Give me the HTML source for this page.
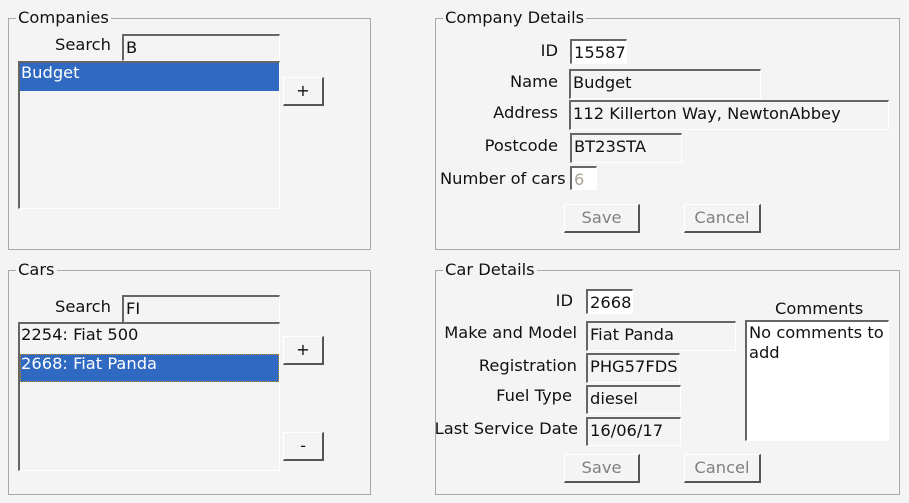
<!DOCTYPE html>
<html><head><style>
body{margin:0;width:909px;height:503px;background:#f4f4f4;font-family:"DejaVu Sans","Liberation Sans",sans-serif;font-size:16.3px;color:#111;position:relative;overflow:hidden}
div,span{position:absolute;box-sizing:border-box}
.grp{border:1px solid #a8a8a8}
.ttl{background:#f4f4f4;padding:0 2px;line-height:18px;top:-10px;left:7px}
.lbl{line-height:20px;white-space:nowrap}
.r{text-align:right}
.fld{border-top:2px solid #666;border-left:2px solid #666;border-right:1px solid #fff;border-bottom:1px solid #fff;padding-left:2px;line-height:24px;white-space:nowrap;overflow:hidden}
.w{background:#fff}
.btn{border-top:1px solid #fff;border-left:1px solid #fff;border-right:2px solid #555;border-bottom:2px solid #555;text-align:center;line-height:25px}
.dis{color:#808080}
.sel{background:#2f69c2;color:#fff;padding-left:1px;line-height:20px}
</style></head><body>

<div class="grp" style="left:8px;top:18px;width:363px;height:232px"><span class="ttl">Companies</span></div>
<div class="lbl" style="left:55px;top:35px">Search</div>
<div class="fld" style="left:122px;top:34px;width:158px;height:27px">B</div>
<div class="fld" style="left:18px;top:61px;width:262px;height:148px;padding:0"><div class="sel" style="left:0;top:0;right:0;height:28px">Budget</div></div>
<div class="btn" style="left:283px;top:77px;width:41px;height:29px">+</div>

<div class="grp" style="left:8px;top:270px;width:363px;height:225px"><span class="ttl">Cars</span></div>
<div class="lbl" style="left:55px;top:297px">Search</div>
<div class="fld" style="left:122px;top:295px;width:158px;height:28px">FI</div>
<div class="fld" style="left:18px;top:322px;width:262px;height:149px;padding:0">
<div style="left:1px;top:0;line-height:22px">2254: Fiat 500</div>
<div class="sel" style="left:0;top:30px;right:0;height:28px;outline:1px dotted #c80;outline-offset:-1px">2668: Fiat Panda</div></div>
<div class="btn" style="left:283px;top:336px;width:41px;height:29px">+</div>
<div class="btn" style="left:283px;top:432px;width:41px;height:29px">-</div>

<div class="grp" style="left:435px;top:18px;width:465px;height:232px"><span class="ttl">Company Details</span></div>
<div class="lbl r" style="right:351px;top:41px">ID</div>
<div class="fld w" style="left:570px;top:39px;width:57px;height:25px">15587</div>
<div class="lbl r" style="right:351px;top:72px">Name</div>
<div class="fld" style="left:569px;top:69px;width:192px;height:30px">Budget</div>
<div class="lbl r" style="right:351px;top:103px">Address</div>
<div class="fld" style="left:569px;top:100px;width:320px;height:30px">112 Killerton Way, NewtonAbbey</div>
<div class="lbl r" style="right:351px;top:136px">Postcode</div>
<div class="fld" style="left:570px;top:133px;width:112px;height:30px">BT23STA</div>
<div class="lbl" style="left:440px;top:169px">Number of cars</div>
<div class="fld w dis" style="left:570px;top:166px;width:27px;height:24px;color:#aaa69a">6</div>
<div class="btn dis" style="left:564px;top:204px;width:76px;height:29px">Save</div>
<div class="btn dis" style="left:684px;top:204px;width:77px;height:29px">Cancel</div>

<div class="grp" style="left:435px;top:270px;width:465px;height:225px"><span class="ttl">Car Details</span></div>
<div class="lbl r" style="right:336px;top:291px">ID</div>
<div class="fld w" style="left:586px;top:289px;width:47px;height:25px">2668</div>
<div class="lbl r" style="right:332px;top:323px">Make and Model</div>
<div class="fld" style="left:586px;top:321px;width:150px;height:30px">Fiat Panda</div>
<div class="lbl r" style="right:332px;top:356px">Registration</div>
<div class="fld" style="left:586px;top:353px;width:94px;height:30px">PHG57FDS</div>
<div class="lbl r" style="right:337px;top:386px">Fuel Type</div>
<div class="fld" style="left:586px;top:385px;width:95px;height:29px">diesel</div>
<div class="lbl r" style="right:331px;top:419px">Last Service Date</div>
<div class="fld" style="left:586px;top:417px;width:95px;height:29px">16/06/17</div>
<div class="lbl" style="left:775px;top:299px">Comments</div>
<div class="fld w" style="left:745px;top:320px;width:144px;height:121px;white-space:normal;line-height:20px;padding-top:1px">No comments to add</div>
<div class="btn dis" style="left:564px;top:454px;width:76px;height:29px">Save</div>
<div class="btn dis" style="left:684px;top:454px;width:77px;height:29px">Cancel</div>
</body></html>
